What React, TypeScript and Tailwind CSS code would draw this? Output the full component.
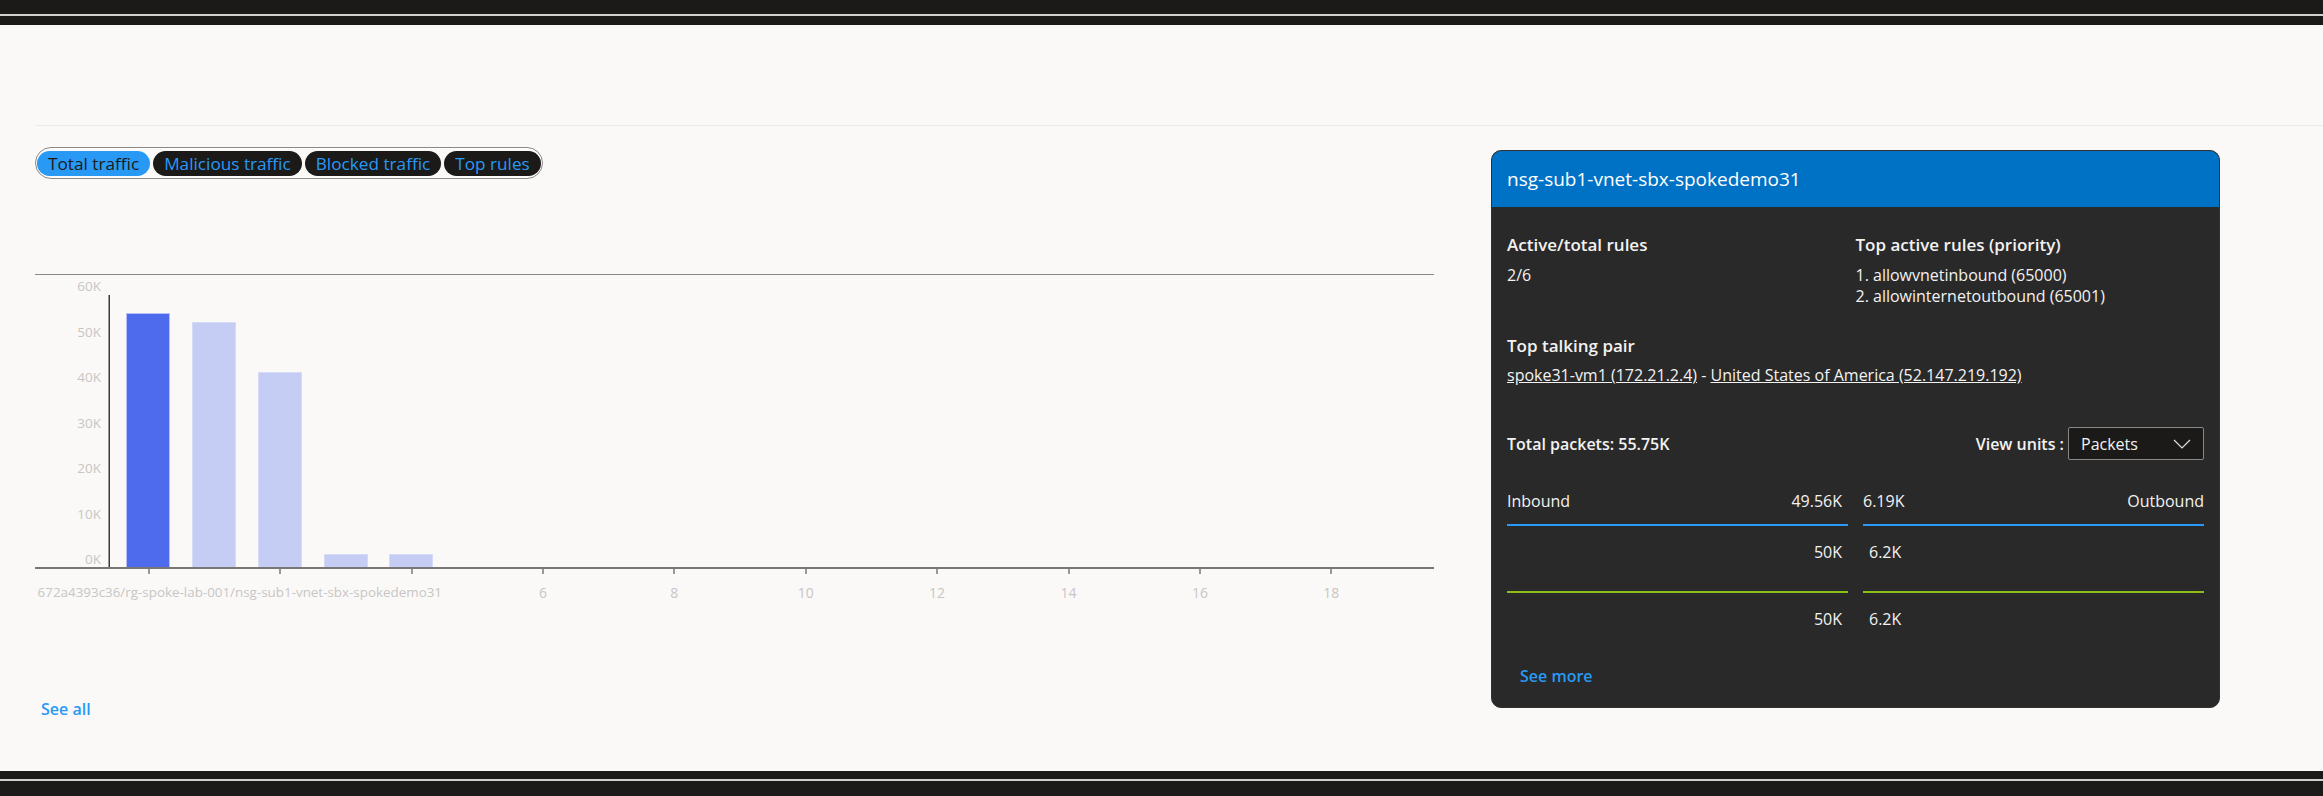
import React from 'react';

const tabs = ['Total traffic', 'Malicious traffic', 'Blocked traffic', 'Top rules'];

// bar tops in chart coordinates (baseline sits at 293)
const bars = [
  { x: 91, top: 39, active: true },
  { x: 157, top: 48, active: false },
  { x: 223, top: 98, active: false },
  { x: 289, top: 280, active: false },
  { x: 354, top: 280, active: false },
];

const yLabels = ['60K', '50K', '40K', '30K', '20K', '10K', '0K'];
const xTicks = [0, 2, 4, 6, 8, 10, 12, 14, 16, 18];

const TrafficChart: React.FC = () => {
  const tickX = (i: number) => 113.7 + (i / 2) * 131.4;

  return (
    <svg width={1399} height={330} className="block" style={{ fontFamily: '"Open Sans", sans-serif' }}>
      <rect x={0} y={0} width={1399} height={1} fill="#8a8886" />

      {yLabels.map((label, i) => (
        <text key={label} x={66} y={12 + i * 45.5} textAnchor="end" dominantBaseline="central" fontSize={13.5} fill="#c8c6c4">
          {label}
        </text>
      ))}

      {bars.map((b) => (
        <rect
          key={b.x}
          x={b.x + 0.5}
          y={b.top + 0.5}
          width={43}
          height={293 - b.top}
          fill={b.active ? '#4f6bed' : '#c6cdf4'}
          stroke={b.active ? '#b4c0f7' : '#d6dcf8'}
          strokeWidth={1}
        />
      ))}

      <rect x={73.5} y={21} width={1.5} height={272} fill="#3b3a39" />
      <rect x={0} y={293} width={1399} height={2} fill="#797775" />

      {xTicks.map((t) => (
        <rect key={t} x={Math.round(tickX(t)) - 0.5} y={295} width={1} height={5} fill="#3b3a39" />
      ))}

      <text x={407} y={318} textAnchor="end" dominantBaseline="central" fontSize={13.4} fill="#c8c6c4">
        672a4393c36/rg-spoke-lab-001/nsg-sub1-vnet-sbx-spokedemo31
      </text>
      {xTicks.slice(3).map((t) => (
        <text key={t} x={tickX(t)} y={318} textAnchor="middle" dominantBaseline="central" fontSize={14} fill="#c8c6c4">
          {t}
        </text>
      ))}
    </svg>
  );
};

const App: React.FC = () => {
  return (
    <div className="min-h-screen flex flex-col bg-[#faf9f8] text-[#1b1a19] font-['Open_Sans',sans-serif]">
      {/* top frame */}
      <div className="h-[14px] bg-[#1b1a19]" />
      <div className="h-[2px] bg-[#d2d0ce]" />
      <div className="h-[9px] bg-[#1b1a19]" />

      <div className="flex-1 flex flex-col">
        <div className="h-[100px]" />
        <div className="ml-[35px] h-px bg-[#edebe9]" />

        <div className="flex pl-[35px] gap-[57px]">
          {/* left: tabs + chart */}
          <div className="w-[1399px] flex flex-col pt-[21px]">
            <div className="self-start flex items-center gap-[3px] h-[32px] px-[1px] rounded-full border border-[#8a8886] shadow-[inset_0_0_0_1px_#ffffff]">
              {tabs.map((t, i) => (
                <button
                  key={t}
                  className={
                    i === 0
                      ? 'h-[25px] px-[11px] rounded-full bg-[#2899f5] text-[#1b1a19] text-[17.2px] leading-[25px]'
                      : 'h-[25px] px-[11px] rounded-full bg-[#1b1a19] text-[#2899f5] text-[17.2px] leading-[25px]'
                  }
                >
                  {t}
                </button>
              ))}
            </div>

            <div className="mt-[95px]">
              <TrafficChart />
            </div>

            <a className="mt-[93px] ml-[6px] self-start text-[16px] leading-[24px] font-semibold text-[#2899f5]">See all</a>
          </div>

          {/* right: nsg card */}
          <div className="mt-[24px] w-[729px] h-[558px] rounded-[10px] border border-[#323130] overflow-hidden bg-[#292929] text-[#f3f2f1] flex flex-col">
            <div className="h-[56px] bg-[#0072c6] px-[15px] flex items-center">
              <span className="text-[19px] leading-[26px] text-white">nsg-sub1-vnet-sbx-spokedemo31</span>
            </div>

            <div className="px-[15px] pt-[26px] flex flex-col text-[16px]">
              <div className="grid grid-cols-2">
                <div>
                  <div className="text-[17px] font-semibold leading-[24px]">Active/total rules</div>
                  <div className="mt-[8px] leading-[21px]">2/6</div>
                </div>
                <div>
                  <div className="text-[17px] font-semibold leading-[24px]">Top active rules (priority)</div>
                  <div className="mt-[8px] leading-[21px]">1. allowvnetinbound (65000)</div>
                  <div className="leading-[21px]">2. allowinternetoutbound (65001)</div>
                </div>
              </div>

              <div className="mt-[27px] text-[17px] font-semibold leading-[24px]">Top talking pair</div>
              <div className="mt-[7px] leading-[21px]">
                <a className="underline">spoke31-vm1 (172.21.2.4)</a>
                <span> - </span>
                <a className="underline">United States of America (52.147.219.192)</a>
              </div>

              <div className="mt-[41px] flex items-center justify-between h-[33px]">
                <span className="font-semibold">Total packets: 55.75K</span>
                <div className="flex items-center gap-[4px]">
                  <span className="font-semibold">View units :</span>
                  <div className="w-[136px] h-[33px] rounded-[2px] border border-[#8a8886] bg-[#1b1a19] flex items-center justify-between pl-[12px] pr-[12px]">
                    <span>Packets</span>
                    <svg width="18" height="10" viewBox="0 0 18 10" fill="none">
                      <path d="M1 1 L9 9 L17 1" stroke="#e1dfdd" strokeWidth="1.2" />
                    </svg>
                  </div>
                </div>
              </div>

              <div className="mt-[29px] grid grid-cols-2 gap-x-[15px]">
                <div className="flex flex-col">
                  <div className="flex justify-between pr-[6px] leading-[24px]">
                    <span>Inbound</span>
                    <span>49.56K</span>
                  </div>
                  <div className="mt-[11px] h-[2px] bg-[#2899f5]" />
                  <div className="mt-[14px] text-right pr-[6px] leading-[24px]">50K</div>
                  <div className="mt-[27px] h-[2px] bg-[#8cbd18]" />
                  <div className="mt-[14px] text-right pr-[6px] leading-[24px]">50K</div>
                </div>
                <div className="flex flex-col">
                  <div className="flex justify-between leading-[24px]">
                    <span>6.19K</span>
                    <span>Outbound</span>
                  </div>
                  <div className="mt-[11px] h-[2px] bg-[#2899f5]" />
                  <div className="mt-[14px] pl-[6px] leading-[24px]">6.2K</div>
                  <div className="mt-[27px] h-[2px] bg-[#8cbd18]" />
                  <div className="mt-[14px] pl-[6px] leading-[24px]">6.2K</div>
                </div>
              </div>

              <a className="mt-[33px] ml-[13px] self-start font-semibold leading-[24px] text-[#2899f5]">See more</a>
            </div>
          </div>
        </div>
      </div>

      {/* bottom frame */}
      <div className="h-[8px] bg-[#1b1a19]" />
      <div className="h-[2px] bg-[#d2d0ce]" />
      <div className="h-[15px] bg-[#1b1a19]" />
    </div>
  );
};

export default App;
